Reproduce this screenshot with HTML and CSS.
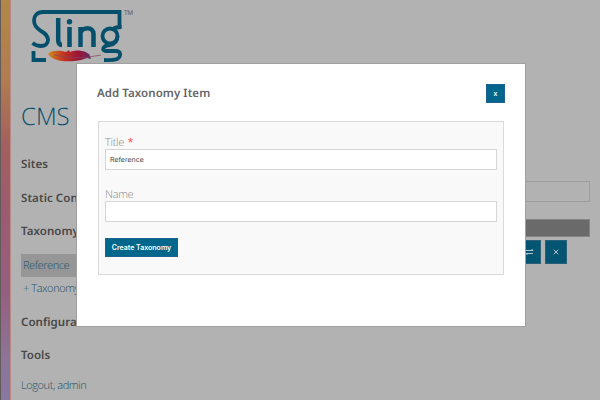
FILE: index.html
```
<!DOCTYPE html>
<html lang="en">
<head>
<meta charset="utf-8">
<title>Sling CMS</title>
<link rel="stylesheet" href="styles.css">
</head>
<body>
<div class="page">
  <div class="stripe"></div>
  <aside class="sidebar">
    <svg class="logo" viewBox="0 0 112 60" width="112" height="60" role="img" aria-label="Sling">
      <g fill="none" stroke="#04506c" stroke-width="3.800">
        <path d="M90.500 22V6H14C8 6 5 10 5 14C5 20 8 22 12 25C17 28 19 30 19 34C19 38 16 40 12 40C8 40 6 39 3.500 37"/>
        <path stroke-width="4.500" d="M29.200 12V34Q29.200 39 33 39M40.500 21V41M51.500 41V21M51.500 27C53 21 64.500 20 64.500 28V41"/>
        <ellipse cx="81" cy="30" rx="7.500" ry="7.500"/>
        <path d="M84 23Q87 21 92.500 21M88.500 30C88.500 36 86 38 81 39C73 40 72 45 78 45H86C93 45 92 51 88 53C84 54.500 79 54 75 54"/>
        <path d="M4.500 45V54H17"/>
      </g>
      <circle cx="40.500" cy="15.700" r="2.700" fill="#04506c"/>
      <linearGradient id="feather"><stop offset="0" stop-color="#cf8a20"/><stop offset=".35" stop-color="#c4351f"/><stop offset=".7" stop-color="#9d1435"/><stop offset="1" stop-color="#642b69"/></linearGradient>
      <path d="M19 48C22 44 30 44 37 46L40 44L41 46C46 44 52 44 56 46L55 45L60 48L59 46L61 50L62 53L58 52L52 54C42 56 25 57 19 48Z" fill="url(#feather)"/>
      <path d="M25 49Q45 53 60 51L72 49" fill="none" stroke="#80465f" stroke-width=".7"/>
      <text x="95" y="8.500" class="tm" textLength="9">TM</text>
    </svg>
    <h1>CMS</h1>
    <nav>
      <h2>Sites</h2>
      <h2>Static Content</h2>
      <h2>Taxonomy</h2>
      <a class="item current">Reference</a>
      <a class="item add">+ Taxonomy</a>
      <h2 class="after">Configuration</h2>
      <h2>Tools</h2>
      <a class="logout">Logout, admin</a>
    </nav>
  </aside>
  <main class="content">
    <div class="search"></div>
    <div class="table-head"></div>
    <div class="actions">
      <span class="action"><svg width="10" height="10" viewBox="0 0 10 10"><path d="M1 3.500H8L6.500 2M8 6.500H1L2.500 8"/></svg></span>
      <span class="action"><svg width="10" height="10" viewBox="0 0 10 10"><path d="M2.700 2.700L7.300 7.300M7.300 2.700L2.700 7.300"/></svg></span>
    </div>
  </main>
</div>
<div class="modal">
  <header>
    <h3>Add Taxonomy Item</h3>
    <button class="close">x</button>
  </header>
  <form>
    <label>Title <b>*</b></label>
    <div class="field">Reference</div>
    <label>Name</label>
    <div class="field"></div>
    <button class="create" type="button">Create Taxonomy</button>
  </form>
</div>
</body>
</html>
```
FILE: styles.css
```
* { box-sizing: border-box; }
body { margin: 0; width: 600px; height: 400px; overflow: hidden; background: #b2b2b2; font-family: "Open Sans", sans-serif; font-size: 11px; text-rendering: geometricPrecision; }
h1, h2, h3 { margin: 0; }
.page { display: flex; height: 400px; }
.stripe { width: 11px; flex: none; border-left: 1px solid #635a5c; border-right: 1px solid #b88982; background: linear-gradient(#b08848 0%, #b07c50 20%, #a4605e 36%, #9c5b70 52%, #965f80 73%, #8c7598 90%, #8878a0 100%); }
.sidebar { width: 190px; padding: 6px 0 0 10px; flex: none; }
.logo { display: block; margin-left: 8px; overflow: visible; }
.tm { font: 6.500px "Open Sans", sans-serif; fill: #565656; }
h1 { margin-top: 34px; height: 33px; line-height: 33px; font-size: 24px; font-weight: 300; color: #04506c; }
nav { padding-top: 22px; }
h2 { height: 17px; margin-bottom: 16.500px; line-height: 19px; font-family: "Noto Sans", sans-serif; font-size: 11.500px; letter-spacing: .06px; font-weight: 600; color: #484848; white-space: nowrap; }
.item { display: block; height: 23px; line-height: 23px; padding-left: 2px; font-size: 11px; letter-spacing: -.42px; font-weight: 300; color: #204f68; }
.current { background: #969696; margin-top: -2px; }
.after { margin-top: 13px; }
.logout { display: block; margin-top: -3px; line-height: 17px; letter-spacing: -.42px; font-weight: 300; color: #204f68; }
.content { flex: 1; padding: 181px 10px 0 0; }
.search { height: 21px; border: 1px solid #9c9c9c; }
.table-head { height: 18px; margin-top: 17px; background: #6a6a6a; border: 1px solid #858585; }
.actions { display: flex; justify-content: flex-end; gap: 4px; margin: 3px 23px 0 0; }
.action { width: 22px; height: 24px; display: flex; align-items: center; justify-content: center; background: #045572; border: 1px solid #2c6078; }
.action path { fill: none; stroke: #b6c5cc; stroke-width: 1; }
.modal { position: absolute; left: 76px; top: 63px; width: 450px; height: 264px; padding: 0 21px; background: #fff; border: 1px solid #a0a0a0; }
header { display: flex; justify-content: space-between; height: 57px; padding: 20px 0 0; }
h3 { margin-left: -1px; line-height: 19px; font-family: "Noto Sans", sans-serif; font-size: 11.500px; letter-spacing: .06px; font-weight: 600; color: #666; }
button { padding: 0; color: #fff; background: #00678c; border: 1px solid #1d6290; font-family: Inter, sans-serif; }
.close { width: 19px; height: 19px; margin-right: -1px; font: 600 7px/15px "Open Sans", sans-serif; }
form { height: 154px; padding: 13px 6px 0; background: #f9f9f9; border: 1px solid #dadada; }
label { display: block; height: 14px; line-height: 15px; letter-spacing: -.3px; font-size: 11px; font-weight: 300; color: #888; }
label b { margin-left: 1px; font-weight: 400; color: #ff5050; }
.field { height: 21px; margin-bottom: 16.500px; padding-left: 4px; border: 1px solid #d5d5d5; background: #fff; font: 7px/19px Inter, sans-serif; color: #444; }
.create { display: block; width: 73px; height: 19px; font-size: 7px; font-weight: 600; line-height: 17px; }
```
